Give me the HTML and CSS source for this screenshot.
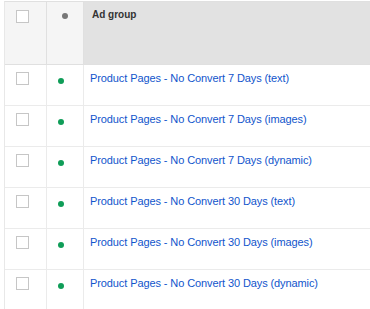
FILE: index.html
```html
<!DOCTYPE html>
<html lang="en">
    <head>
        <meta charset="UTF-8">
        <title>Ad groups</title>
        <link rel="stylesheet" href="styles.css">
    </head>
    <body>
        <div class="grid">
            <div class="row head">
                <div class="cell"><span class="check"></span></div>
                <div class="cell"><span class="dot grey"></span></div>
                <div class="cell name">Ad group</div>
            </div>
            <div class="row">
                <div class="cell"><span class="check"></span></div>
                <div class="cell"><span class="dot"></span></div>
                <div class="cell"><a href="#">Product Pages - No Convert 7 Days (text)</a></div>
            </div>
            <div class="row">
                <div class="cell"><span class="check"></span></div>
                <div class="cell"><span class="dot"></span></div>
                <div class="cell"><a href="#">Product Pages - No Convert 7 Days (images)</a></div>
            </div>
            <div class="row">
                <div class="cell"><span class="check"></span></div>
                <div class="cell"><span class="dot"></span></div>
                <div class="cell"><a href="#">Product Pages - No Convert 7 Days (dynamic)</a></div>
            </div>
            <div class="row">
                <div class="cell"><span class="check"></span></div>
                <div class="cell"><span class="dot"></span></div>
                <div class="cell"><a href="#">Product Pages - No Convert 30 Days (text)</a></div>
            </div>
            <div class="row">
                <div class="cell"><span class="check"></span></div>
                <div class="cell"><span class="dot"></span></div>
                <div class="cell"><a href="#">Product Pages - No Convert 30 Days (images)</a></div>
            </div>
            <div class="row">
                <div class="cell"><span class="check"></span></div>
                <div class="cell"><span class="dot"></span></div>
                <div class="cell"><a href="#">Product Pages - No Convert 30 Days (dynamic)</a></div>
            </div>
        </div>
    </body>
</html>
```

FILE: styles.css
```css
/* Page font and background */
body {
    margin: 0;
    background-color: #fff;
    font-family: Arial, "Liberation Sans", sans-serif;
}

/* Table wrapper */
.grid {
    width: 366px;
    margin: 1px 0 0 4px;
    border-top: 1px solid #e0e0e0;
    border-left: 1px solid #e8e8e8;
}

.row {
    display: grid;
    grid-template-columns: 41px 37px 1fr;
    height: 41px;
    box-sizing: border-box;
    border-bottom: 1px solid #ebebeb;
}

.cell {
    position: relative;
}

.cell + .cell {
    border-left: 1px solid #ebebeb;
}

/* Header row */
.row.head {
    height: 63px;
    border-bottom-color: #e0e0e0;
}

.row.head .cell {
    background-color: #f5f5f5;
}

.row.head .cell + .cell {
    border-left-color: #e0e0e0;
}

.row.head .name {
    background-color: #e2e2e2;
    padding: 7px 0 0 8px;
    font-size: 10px;
    line-height: 12px;
    font-weight: bold;
    color: #333;
}

/* Checkbox */
.check {
    display: block;
    width: 13px;
    height: 13px;
    box-sizing: border-box;
    margin: 7px 0 0 11px;
    border: 1px solid #c6c6c6;
    background-color: #fff;
}

.row.head .check {
    margin-top: 8px;
}

/* Status dot */
.dot {
    display: block;
    width: 6px;
    height: 6px;
    margin: 13px 0 0 11px;
    border-radius: 50%;
    background-color: #0f9d58;
}

.dot.grey {
    margin: 11px 0 0 15px;
    background-color: #777;
}

/* Ad group link */
.cell a {
    display: block;
    padding: 6px 0 0 6px;
    font-size: 11px;
    line-height: 14px;
    letter-spacing: -0.1px;
    color: #1155cc;
    text-decoration: none;
}
```
